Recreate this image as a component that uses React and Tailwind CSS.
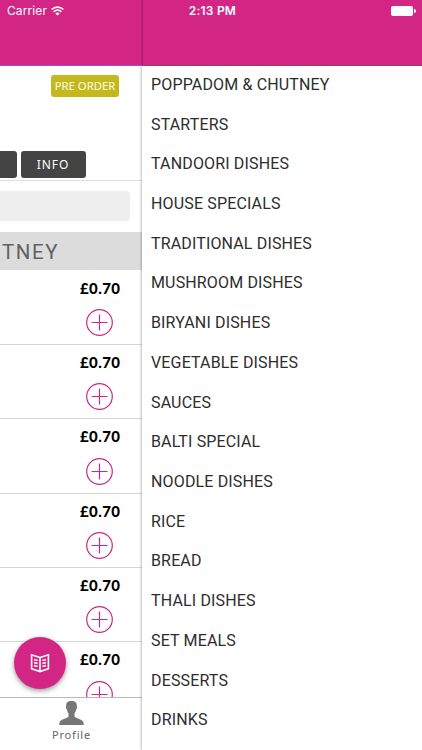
import React from "react";

const categories = [
  "POPPADOM & CHUTNEY",
  "STARTERS",
  "TANDOORI DISHES",
  "HOUSE SPECIALS",
  "TRADITIONAL DISHES",
  "MUSHROOM DISHES",
  "BIRYANI DISHES",
  "VEGETABLE DISHES",
  "SAUCES",
  "BALTI SPECIAL",
  "NOODLE DISHES",
  "RICE",
  "BREAD",
  "THALI DISHES",
  "SET MEALS",
  "DESSERTS",
  "DRINKS",
];

const prices = ["£0.70", "£0.70", "£0.70", "£0.70", "£0.70", "£0.70"];

function StatusBar() {
  return (
    <div className="grid h-[22px] grid-cols-3 items-center pl-[7px] pr-[6px] font-['Inter','Liberation_Sans',sans-serif] text-white">
      <div className="flex items-center gap-[4px] text-[12px] tracking-[0.1px]">
        <span>Carrier</span>
        <svg width="13" height="10" viewBox="0 0 13 10" fill="none">
          <path
            d="M.6 3.5C4 .3 9 .3 12.4 3.5M2.6 5.8C5 3.6 8 3.6 10.4 5.8"
            stroke="white"
            strokeWidth="1.6"
          />
          <path d="M4.3 7.4C5.6 6.3 7.4 6.3 8.7 7.4L6.5 9.6Z" fill="white" />
        </svg>
      </div>
      <div className="pl-[2px] text-center text-[12px] font-semibold tracking-[0.2px]">
        2:13 PM
      </div>
      <div className="flex items-center justify-end gap-px">
        <div className="h-[10px] w-[22px] rounded-[2px] bg-white" />
        <div className="h-[4px] w-[1.5px] rounded-r bg-white" />
      </div>
    </div>
  );
}

function AddButton() {
  return (
    <button type="button" className="mr-[29px] block shrink-0">
      <svg
        width="27"
        height="27"
        viewBox="0 0 27 27"
        fill="none"
        stroke="#c92a83"
        strokeWidth="1.2"
      >
        <circle cx="13.5" cy="13.5" r="12.8" />
        <path d="M13.5 5.5V21.5M5.5 13.5H21.5" />
      </svg>
    </button>
  );
}

function MenuItem({ price }) {
  return (
    <div className="flex h-[74.3px] shrink-0 flex-col items-end border-b border-[#d6d6d6] pt-[7px]">
      <span className="mr-[21.5px] mb-[11.4px] h-5 font-['Lato',sans-serif] text-[15px] leading-5 font-black tracking-[0.45px] text-black">
        {price}
      </span>
      <AddButton />
    </div>
  );
}

function MenuPanel() {
  return (
    <section className="relative flex h-full w-[142px] shrink-0 flex-col bg-white font-['Noto_Sans','Open_Sans',sans-serif]">
      <div className="flex h-[85px] shrink-0 justify-end pt-[9px] pr-[23px]">
        <span className="flex h-[22px] w-[68px] items-center justify-center rounded-[3px] bg-[#c3b91f] text-[11.3px] whitespace-nowrap text-[#fffde4]">
          PRE ORDER
        </span>
      </div>
      <div className="flex h-[30px] shrink-0 gap-1 border-b border-[#dedede] text-[12px] tracking-[0.9px] text-white">
        <span className="h-[27px] w-[16.5px] rounded-r-[3px] bg-[#444444]" />
        <span className="flex h-[27px] w-[65px] items-center justify-center rounded-[3px] bg-[#444444]">
          INFO
        </span>
      </div>
      <div className="h-[51px] shrink-0 pt-[10px] pr-3">
        <div className="h-[30px] rounded-r-[4px] bg-[#eeeeee]" />
      </div>
      <div className="flex h-[38px] shrink-0 items-center bg-[#dcdcdc] pt-[2px] pl-[2px] font-['Roboto',sans-serif] text-[20.5px] tracking-[1.6px] text-[#626262]">
        TNEY
      </div>
      <div className="min-h-0 flex-1 overflow-hidden pt-[0.7px]">
        {prices.map((price, index) => (
          <MenuItem key={index} price={price} />
        ))}
      </div>
      <div className="flex h-[53px] shrink-0 flex-col items-center border-t border-[#b9b9b9] pt-[3px] text-[#666666]">
        <svg width="25" height="24" viewBox="0 0 25 24" fill="#777777">
          <path d="M12.5 0C8.6 0 6.9 1.8 7.2 5.2C6.6 5.4 7 8 7.9 8.4C8.2 10.3 8.8 11.4 9.5 12.2V15.6C8.5 17.3 5.3 17.8 3 18.8C.8 19.9 .3 21.3 .2 24H24.8C24.7 21.3 24.2 19.9 22 18.8C19.7 17.8 16.5 17.3 15.5 15.6V12.2C16.2 11.4 16.8 10.3 17.1 8.4C18 8 18.4 5.4 17.8 5.2C18.1 1.8 16.4 0 12.5 0Z" />
        </svg>
        <span className="mt-[2px] pl-[1px] text-[11px] leading-[16px] tracking-[0.8px]">
          Profile
        </span>
      </div>
      <button
        type="button"
        className="absolute bottom-[61px] left-[14px] flex size-[52px] items-center justify-center rounded-full bg-[#d32584] shadow-[0_2px_5px_rgba(0,0,0,0.4)]"
      >
        <svg
          width="20"
          height="20"
          viewBox="0 0 20 20"
          fill="none"
          stroke="white"
          strokeWidth="1.6"
        >
          <path d="M10 4.6L1.6 1.8V15.7L10 18.6L18.4 15.7V1.8L10 4.6V18.6" />
          <path d="M4 6.4L7.6 7.6M4 9.4L7.6 10.6M4 12.4L7.6 13.6M16 6.4L12.4 7.6M16 9.4L12.4 10.6M16 12.4L12.4 13.6" />
        </svg>
      </button>
    </section>
  );
}

function CategoryDrawer() {
  return (
    <nav className="relative min-w-0 flex-1 overflow-hidden bg-white font-['Roboto',sans-serif] shadow-[-1px_0_2px_rgba(0,0,0,0.25)]">
      <ul className="-mt-[1px] pl-[9px]">
        {categories.map((category) => (
          <li
            key={category}
            className="flex h-[39.72px] items-center text-[16px] tracking-[0.15px] whitespace-nowrap text-[#2d2d2d]"
          >
            {category}
          </li>
        ))}
      </ul>
    </nav>
  );
}

export default function App() {
  return (
    <main className="relative flex h-[750px] w-[422px] flex-col overflow-hidden bg-white">
      <header className="relative z-10 flex h-[66px] shrink-0 flex-col bg-[#d32584]">
        <StatusBar />
        <div className="mt-auto flex h-px">
          <div className="w-[142px] bg-[#a04fd0]" />
          <div className="flex-1 bg-[#90406c]" />
        </div>
        <div className="absolute top-0 left-[141px] h-full w-[2px] bg-linear-to-r from-black/5 to-black/20" />
      </header>
      <div className="flex min-h-0 flex-1">
        <MenuPanel />
        <CategoryDrawer />
      </div>
    </main>
  );
}
